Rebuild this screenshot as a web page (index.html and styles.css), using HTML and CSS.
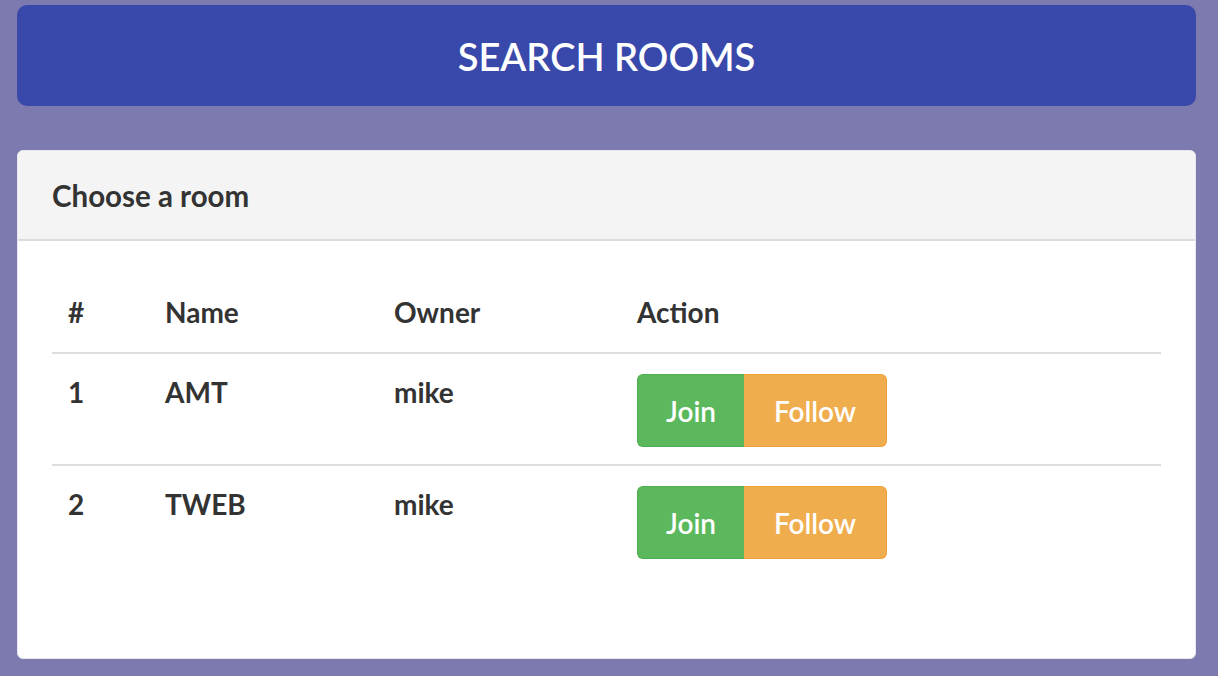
FILE: index.html
```html
<!DOCTYPE html>
<html>
<head>
<meta charset="utf-8">
<link rel="stylesheet" href="styles.css">
</head>
<body>
<div class="page">
  <div class="banner">SEARCH ROOMS</div>
  <div class="panel">
    <div class="panel-heading">Choose a room</div>
    <div class="panel-body">
      <table class="rooms">
        <thead>
          <tr><th class="c-num">#</th><th class="c-name">Name</th><th class="c-owner">Owner</th><th>Action</th></tr>
        </thead>
        <tbody>
          <tr>
            <td>1</td><td>AMT</td><td>mike</td>
            <td><div class="btn-group"><span class="btn btn-join">Join</span><span class="btn btn-follow">Follow</span></div></td>
          </tr>
          <tr>
            <td>2</td><td>TWEB</td><td>mike</td>
            <td><div class="btn-group"><span class="btn btn-join">Join</span><span class="btn btn-follow">Follow</span></div></td>
          </tr>
        </tbody>
      </table>
    </div>
  </div>
</div>
</body>
</html>
```

FILE: styles.css
```css
html, body {
  margin: 0;
  padding: 0;
  background: #7c7aae;
  font-family: Lato, "Open Sans", "Liberation Sans", sans-serif;
  color: #333;
}
.page {
  padding: 5px 22px 0 17px;
  display: flex;
  flex-direction: column;
  gap: 44px;
}
.banner {
  background: #3949ab;
  color: #fff;
  border-radius: 10px;
  height: 101px;
  display: flex;
  align-items: center;
  justify-content: center;
  font-size: 38px;
  font-weight: 600;
}
.panel {
  background: #fff;
  border-radius: 6px;
  overflow: hidden;
  border: 1px solid #e6e6ee;
}
.panel-heading {
  background: #f4f4f4;
  border-bottom: 2px solid #dcdcdc;
  height: 90px;
  box-sizing: border-box;
  padding: 0 34px;
  display: flex;
  align-items: center;
  font-size: 29.5px;
  font-weight: bold;
  color: #333;
}
.panel-body {
  padding: 51px 34px 82px 34px;
}
.rooms {
  width: 100%;
  border-collapse: collapse;
  font-size: 28px;
}
.rooms th, .rooms td {
  text-align: left;
  padding: 0 16px;
  font-weight: bold;
  color: #333;
}
.rooms th {
  height: 60px;
  vertical-align: top;
  line-height: 40px;
  border-bottom: 2px solid #dddddd;
}
.rooms td {
  vertical-align: top;
  padding-top: 20px;
  padding-bottom: 17px;
  line-height: 36px;
}
.rooms tbody tr + tr td {
  border-top: 2px solid #dddddd;
}
.c-num { width: 65px; }
.c-name { width: 197px; }
.c-owner { width: 211px; }
.btn-group {
  display: flex;
}
.btn {
  height: 73px;
  display: flex;
  align-items: center;
  justify-content: center;
  color: #fff;
  font-weight: 600;
  font-size: 28px;
  box-sizing: border-box;
}
.btn-join {
  background: #5cb85c;
  width: 107px;
  border-radius: 6px 0 0 6px;
  border: 1px solid #4cae4c;
  border-right: none;
}
.btn-follow {
  background: #f0ad4e;
  width: 143px;
  border-radius: 0 6px 6px 0;
  border: 1px solid #eea236;
  border-left: none;
}
```
